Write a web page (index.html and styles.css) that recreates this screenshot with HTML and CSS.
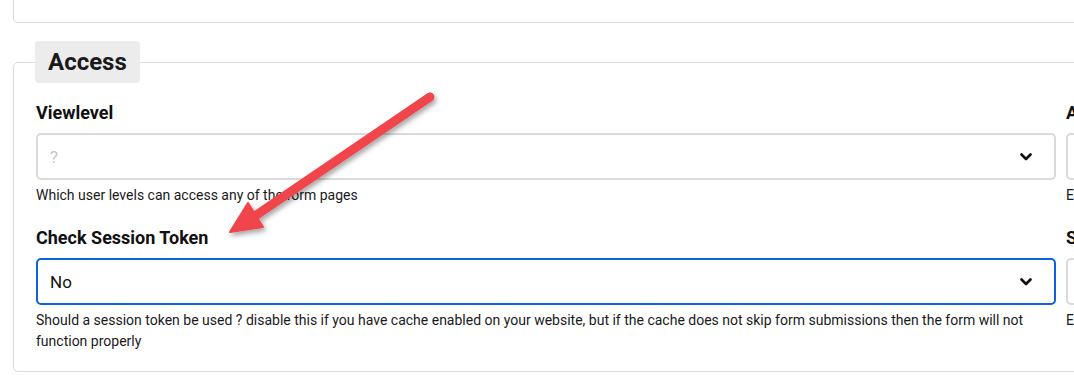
FILE: index.html
```html
<!DOCTYPE html>
<html lang="en">
  <head>
    <meta charset="UTF-8" />
    <meta name="viewport" content="width=device-width, initial-scale=1.0" />
    <title>Form settings - Access</title>
    <link rel="stylesheet" href="styles.css">
  </head>
  <body>
    <!-- previous section, scrolled mostly out of view -->
    <fieldset class="panel panel-prev">
      <p class="help">Display a privacy policy page on your form</p>
    </fieldset>

    <!-- access section -->
    <fieldset class="panel">
      <legend class="panel-title">Access</legend>
      <div class="grid">
        <div class="field">
          <label class="field-label">Viewlevel</label>
          <div class="select">
            <span class="select-value placeholder">?</span>
            <svg class="chevron" viewBox="0 0 12 8" width="12" height="8"><path d="M1.5 1.5 L6 6 L10.5 1.5" /></svg>
          </div>
          <p class="help">Which user levels can access any of the form pages</p>
        </div>
        <div class="field">
          <label class="field-label">Access Denied Message</label>
          <div class="select">
            <span class="select-value placeholder">?</span>
            <svg class="chevron" viewBox="0 0 12 8" width="12" height="8"><path d="M1.5 1.5 L6 6 L10.5 1.5" /></svg>
          </div>
          <p class="help">Enter the message shown to users without access</p>
        </div>
        <div class="field">
          <label class="field-label">Check Session Token</label>
          <div class="select focused">
            <span class="select-value">No</span>
            <svg class="chevron" viewBox="0 0 12 8" width="12" height="8"><path d="M1.5 1.5 L6 6 L10.5 1.5" /></svg>
          </div>
          <p class="help">Should a session token be used ? disable this if you have cache enabled on your website, but if the cache does not skip form submissions then the form will not function properly</p>
        </div>
        <div class="field">
          <label class="field-label">Save Submissions</label>
          <div class="select">
            <span class="select-value">Yes</span>
            <svg class="chevron" viewBox="0 0 12 8" width="12" height="8"><path d="M1.5 1.5 L6 6 L10.5 1.5" /></svg>
          </div>
          <p class="help">Enable to store submissions in the database</p>
        </div>
      </div>
    </fieldset>

    <!-- annotation arrow drawn over the screenshot -->
    <svg class="annotation" width="1074" height="385" viewBox="0 0 1074 385">
      <defs>
        <filter id="arrowShadow" x="-20%" y="-20%" width="140%" height="140%">
          <feDropShadow dx="2" dy="3" stdDeviation="2.5" flood-color="#000" flood-opacity="0.35" />
        </filter>
      </defs>
      <g filter="url(#arrowShadow)" fill="#f0444b" stroke="#f0444b">
        <line x1="430" y1="97" x2="252" y2="218" stroke-width="9" stroke-linecap="round" />
        <polygon points="230,232 248,203 263,227" stroke-width="2" stroke-linejoin="round" />
      </g>
    </svg>
  </body>
</html>
```

FILE: styles.css
```css
/* page */
html,
body {
  overflow: hidden;
}

body {
  margin: 0;
  padding: 0 0 0 13px;
  width: 1200px;
  background: #fff;
  font-family: Roboto, "Liberation Sans", sans-serif;
  color: #111;
}

/* fieldset panels */
.panel {
  margin: 0;
  padding: 18px 22px 19px 22px;
  border: 1px solid #dcdcdc;
  border-radius: 5px;
  min-width: 0;
}

.panel-prev {
  margin-top: -34px;
  margin-bottom: 18px;
  padding-top: 10px;
  padding-bottom: 19px;
}

.panel-title {
  margin-left: -1px;
  padding: 4px 13px 4px 13px;
  background: #ececec;
  border-radius: 4px;
  font-size: 24px;
  line-height: 34px;
  font-weight: 700;
  color: #1a1a1a;
}

/* two column form grid */
.grid {
  display: grid;
  grid-template-columns: 1020px 1020px;
  column-gap: 10px;
  row-gap: 20px;
}

.field {
  display: flex;
  flex-direction: column;
}

.field-label {
  font-size: 18px;
  line-height: 24px;
  font-weight: 700;
  margin-bottom: 8px;
}

/* select look-alike */
.select {
  display: flex;
  align-items: center;
  justify-content: space-between;
  height: 47px;
  box-sizing: border-box;
  padding: 0 22px 0 12px;
  border: 2px solid #dadada;
  border-radius: 5px;
  background: #fff;
}

.select.focused {
  border-color: #0b61de;
}

.select-value {
  font-size: 17px;
  color: #111;
}

.select-value.placeholder {
  color: #c6c6c6;
}

.chevron path {
  fill: none;
  stroke: #111;
  stroke-width: 2.6;
  stroke-linecap: round;
  stroke-linejoin: round;
}

.help {
  margin: 5px 0 0;
  font-size: 14px;
  line-height: 21px;
  color: #1a1a1a;
}

/* annotation overlay */
.annotation {
  position: absolute;
  left: 0;
  top: 0;
  pointer-events: none;
}
```
